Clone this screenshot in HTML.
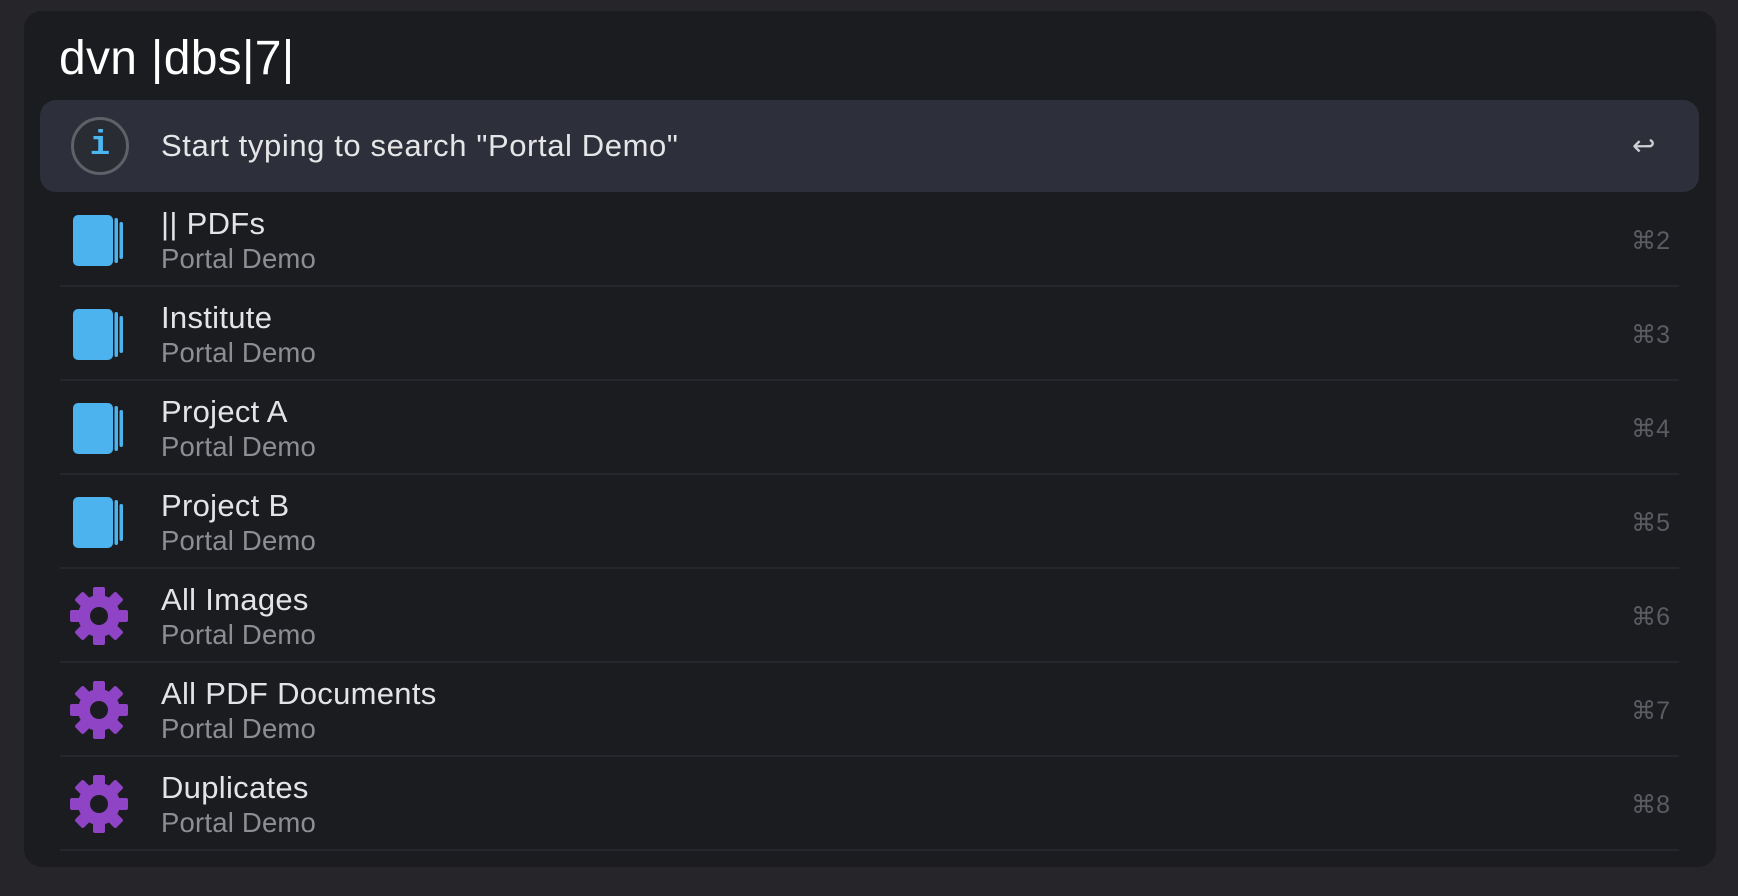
<!DOCTYPE html>
<html><head><meta charset="utf-8"><style>
*{margin:0;padding:0;box-sizing:border-box}
body{width:1738px;height:896px;background:#25252a;font-family:"Liberation Sans",sans-serif;position:relative;overflow:hidden}
.panel{position:absolute;left:24px;top:11px;width:1692px;height:856px;border-radius:18px;background:#1b1c20}
.input{position:absolute;left:59px;top:29px;font-size:48px;color:#fff;line-height:60px;letter-spacing:0.3px}
.hl{position:absolute;left:40px;top:100px;width:1659px;height:92px;border-radius:16px;background:#2d303a}
.info{position:absolute;left:71px;top:117px;width:58px;height:58px;border-radius:50%;border:3px solid #5e6168;background:#2a2c34;color:#4cb6f0;font:bold 34px "Liberation Mono",monospace;text-align:center;line-height:52px}
.hltext{position:absolute;left:161px;top:127px;font-size:31px;color:#e6e6e8;line-height:38px;letter-spacing:0.6px}
.ret{position:absolute;left:1632px;top:128px;font-size:28px;color:#d0d0d4;line-height:36px}
.row{position:absolute;left:0;width:1738px;height:94px}
.sep{position:absolute;left:60px;width:1619px;height:2px;background:#26272c;bottom:0}
.t{position:absolute;left:161px;top:12px;font-size:31px;color:#e4e4e6;line-height:38px;letter-spacing:0.3px}
.s{position:absolute;left:161px;top:49px;font-size:27.5px;color:#8d8e93;line-height:34px;letter-spacing:0.2px}
.k{position:absolute;right:68px;top:32px;font-size:25px;color:#5a5c62;line-height:32px}
.ic{position:absolute;left:70px;top:20px}
</style></head><body>
<div class="panel"></div>
<div class="input">dvn |dbs|7|</div>
<div class="hl"></div>
<div class="info">i</div>
<div class="hltext">Start typing to search "Portal Demo"</div>
<div class="ret">↩</div>

<svg width="0" height="0" style="position:absolute"><defs>
<g id="book"><rect x="3" y="2" width="40" height="51" rx="5" fill="#4cb3ef"/><rect x="44.5" y="5" width="3.5" height="45" rx="1.7" fill="#4cb3ef"/><rect x="49.5" y="9" width="3.5" height="37" rx="1.7" fill="#4cb3ef"/></g>
<g id="gear"><g fill="#8e44c4"><circle cx="30" cy="30" r="21"/><g id="tooth"><rect x="24" y="1" width="12" height="12" rx="2"/></g><use href="#tooth" transform="rotate(45 30 30)"/><use href="#tooth" transform="rotate(90 30 30)"/><use href="#tooth" transform="rotate(135 30 30)"/><use href="#tooth" transform="rotate(180 30 30)"/><use href="#tooth" transform="rotate(225 30 30)"/><use href="#tooth" transform="rotate(270 30 30)"/><use href="#tooth" transform="rotate(315 30 30)"/></g><circle cx="30" cy="30" r="9" fill="#1b1c20"/></g></defs></svg>

<div class="row" style="top:193px"><svg class="ic" width="60" height="56" viewBox="0 0 60 56"><use href="#book"/></svg><div class="t">|| PDFs</div><div class="s">Portal Demo</div><div class="k">⌘2</div><div class="sep"></div></div>
<div class="row" style="top:287px"><svg class="ic" width="60" height="56" viewBox="0 0 60 56"><use href="#book"/></svg><div class="t">Institute</div><div class="s">Portal Demo</div><div class="k">⌘3</div><div class="sep"></div></div>
<div class="row" style="top:381px"><svg class="ic" width="60" height="56" viewBox="0 0 60 56"><use href="#book"/></svg><div class="t">Project A</div><div class="s">Portal Demo</div><div class="k">⌘4</div><div class="sep"></div></div>
<div class="row" style="top:475px"><svg class="ic" width="60" height="56" viewBox="0 0 60 56"><use href="#book"/></svg><div class="t">Project B</div><div class="s">Portal Demo</div><div class="k">⌘5</div><div class="sep"></div></div>

<div class="row" style="top:569px"><svg class="ic" style="left:69px;top:17px" width="60" height="60" viewBox="0 0 60 60"><use href="#gear"/></svg><div class="t">All Images</div><div class="s">Portal Demo</div><div class="k">⌘6</div><div class="sep"></div></div>
<div class="row" style="top:663px"><svg class="ic" style="left:69px;top:17px" width="60" height="60" viewBox="0 0 60 60"><use href="#gear"/></svg><div class="t">All PDF Documents</div><div class="s">Portal Demo</div><div class="k">⌘7</div><div class="sep"></div></div>
<div class="row" style="top:757px"><svg class="ic" style="left:69px;top:17px" width="60" height="60" viewBox="0 0 60 60"><use href="#gear"/></svg><div class="t">Duplicates</div><div class="s">Portal Demo</div><div class="k">⌘8</div><div class="sep"></div></div>
</body></html>
